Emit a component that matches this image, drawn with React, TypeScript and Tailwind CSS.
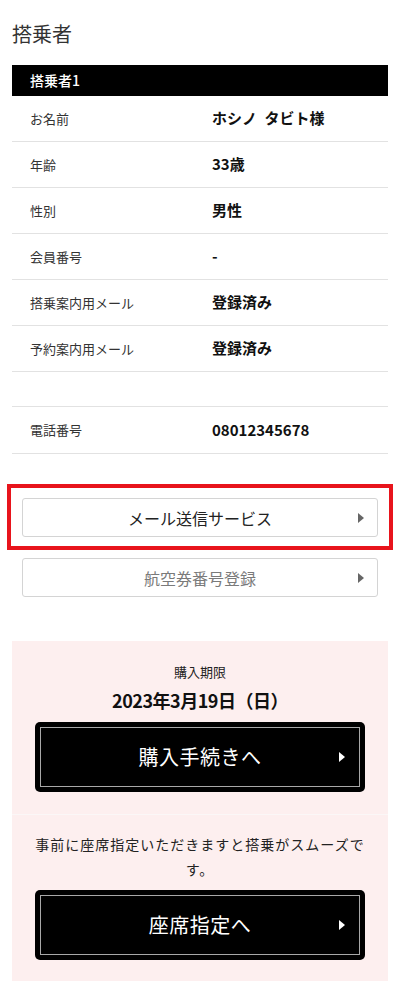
import React from "react";

interface Row {
  label: string;
  value: string;
  height?: string;
}

const rows: Row[] = [
  { label: "お名前", value: "ホシノ\u2002タビト様" },
  { label: "年齢", value: "33歳" },
  { label: "性別", value: "男性" },
  { label: "会員番号", value: "-" },
  { label: "搭乗案内用メール", value: "登録済み" },
  { label: "予約案内用メール", value: "登録済み" },
  { label: "", value: "", height: "h-[35px]" },
  { label: "電話番号", value: "08012345678", height: "h-[47px]" },
];

function Triangle({ className }: { className: string }) {
  return (
    <svg className={className} viewBox="0 0 6 10" width="6" height="10">
      <path d="M0 0 L6 5 L0 10 Z" fill="currentColor" />
    </svg>
  );
}

function LightButton({ label, muted }: { label: string; muted?: boolean }) {
  return (
    <button
      type="button"
      className="relative flex h-[39px] w-full items-center justify-center rounded-[3px] border border-[#d4d4d4] bg-white"
    >
      <span
        className={`text-[16px] leading-none ${
          muted ? "text-[#7a7a7a]" : "text-[#222]"
        }`}
      >
        {label}
      </span>
      <Triangle className="absolute right-[13px] top-1/2 -translate-y-1/2 text-[#666]" />
    </button>
  );
}

function DarkButton({ label }: { label: string }) {
  return (
    <button
      type="button"
      className="relative mx-auto flex h-[70px] w-[330px] items-center justify-center rounded-[5px] bg-black p-[5px]"
    >
      <span className="flex h-full w-full items-center justify-center border-[1.5px] border-[#a8a8a8]">
        <span className="text-[20px] leading-none tracking-[0.5px] text-white">
          {label}
        </span>
      </span>
      <Triangle className="absolute right-[20px] top-1/2 -translate-y-1/2 text-white" />
    </button>
  );
}

export default function App() {
  return (
    <div className="min-h-[997px] w-[400px] bg-white font-['Noto_Sans_CJK_JP','Noto_Sans',sans-serif] text-[#222]">
      <h2 className="px-3 pt-[20px] text-[20px] leading-[28px] text-[#333]">
        搭乗者
      </h2>

      <div className="mx-3 mt-[17px]">
        <div className="flex h-[31px] items-center bg-black pl-[18px] text-[14px] font-medium text-white">
          搭乗者1
        </div>
        {rows.map((row, i) => (
          <div
            key={i}
            className={`flex items-center border-b border-[#e2e2e2] ${
              row.height ?? "h-[46px]"
            }`}
          >
            <div className="w-[200px] pl-[18px] text-[13px] text-[#333]">
              {row.label}
            </div>
            <div className="text-[15px] font-bold text-[#111]">{row.value}</div>
          </div>
        ))}
      </div>

      <div className="mx-[7px] mt-[30px] border-4 border-[#e8141c] px-[11px] pb-[9px] pt-[10px]">
        <LightButton label="メール送信サービス" />
      </div>
      <div className="mx-[22px] mt-[8px]">
        <LightButton label="航空券番号登録" muted />
      </div>

      <div className="mx-3 mt-[44px] bg-[#fdefef]">
        <div className="flex flex-col items-center border-b border-[#fbf7f7] pb-[22px] pt-[22px]">
          <div className="text-[13px] leading-[18px] text-[#222]">購入期限</div>
          <div className="mt-[6px] text-[18px] font-bold leading-[26px] tracking-[-0.5px] text-[#111]">
            2023年3月19日（日）
          </div>
          <div className="mt-[9px] w-full">
            <DarkButton label="購入手続きへ" />
          </div>
        </div>
        <div className="flex flex-col items-center pb-[21px] pt-[17px]">
          <p className="w-[336px] text-center text-[14px] leading-[25px] tracking-[1px] text-[#222]">
            事前に座席指定いただきますと搭乗がスムーズです。
          </p>
          <div className="mt-[8px] w-full">
            <DarkButton label="座席指定へ" />
          </div>
        </div>
      </div>
    </div>
  );
}
